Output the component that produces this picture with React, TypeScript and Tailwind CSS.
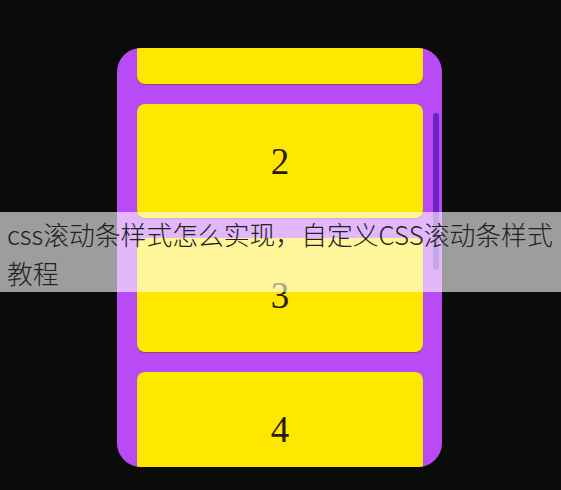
import React from "react";

const cards = [1, 2, 3, 4];

export default function App() {
  return (
    <div className="relative w-[561px] h-[490px] bg-[#0b0b0a] pl-[117px] pt-[48px] overflow-hidden">
      {/* scroll box */}
      <div className="relative w-[325px] h-[419px] rounded-[24px] bg-[#b84bf6] overflow-hidden">
        <ul className="flex flex-col gap-[20px] pl-[20px] -mt-[78px]">
          {cards.map((n) => (
            <li
              key={n}
              className="flex-none w-[286px] h-[114px] rounded-lg bg-[#ffe800] shadow-[0_1px_1px_rgba(120,60,0,0.55)] flex items-center justify-center"
            >
              <span className="text-[37px] leading-none text-[#2a1a08] font-['Liberation_Serif',serif]">
                {n}
              </span>
            </li>
          ))}
        </ul>
        {/* thumb */}
        <div className="absolute right-[3px] top-[65px] w-[6px] h-[157px] rounded-full bg-[#6a24c4]" />
      </div>

      {/* caption bar */}
      <div className="absolute left-0 top-[212px] w-full h-[80px] bg-white/60 pl-[7px] pt-[2px]">
        <p className="text-[25.8px] leading-[39px] font-light text-[#222] font-['Noto_Sans_CJK_SC','Noto_Sans',sans-serif]">
          css滚动条样式怎么实现，自定义CSS滚动条样式
          <br />
          教程
        </p>
      </div>
    </div>
  );
}
